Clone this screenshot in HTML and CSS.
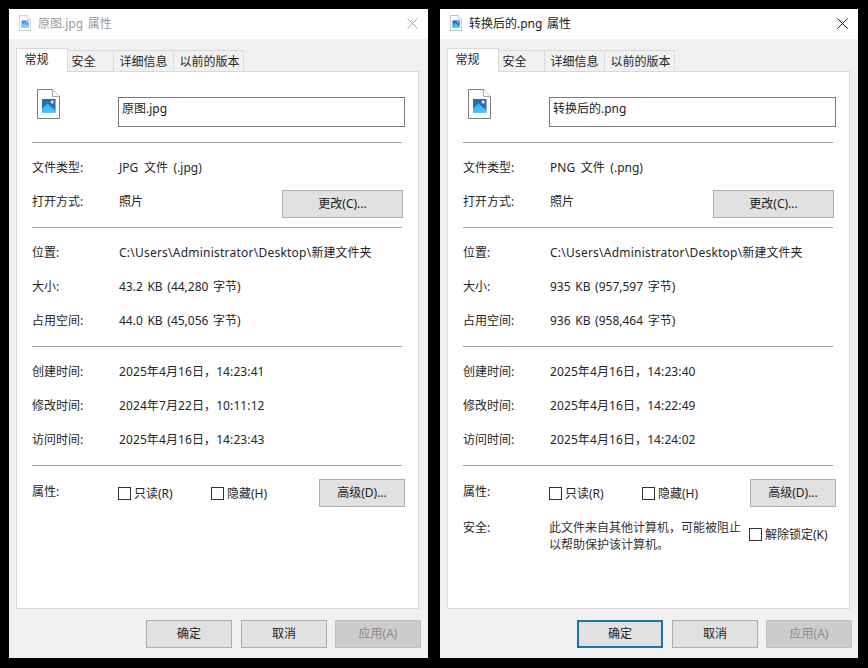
FILE: index.html
```html
<!DOCTYPE html>
<html lang="zh-CN">
<head>
<meta charset="utf-8">
<title>属性</title>
<link rel="stylesheet" href="styles.css">
</head>
<body>
<svg class="defs" width="0" height="0" aria-hidden="true">
  <defs>
    <linearGradient id="sky" x1="0" y1="0" x2="1" y2="1"><stop offset="0" stop-color="#1f6fc0"/><stop offset="1" stop-color="#3a63b8"/></linearGradient>
    <linearGradient id="hill" x1="0" y1="0" x2="1" y2="1"><stop offset="0" stop-color="#2fb4ee"/><stop offset="1" stop-color="#4fc8f2"/></linearGradient>
    <symbol id="file" viewBox="0 0 23 30">
      <path d="M.5.5H15.5L22.5 7.5V29.5H.5Z" fill="#fdfdfd" stroke="#7c7c7c"/>
      <path d="M15.5.5V7.5H22.5" fill="#fff" stroke="#a8a8a8"/>
      <rect x="5" y="10" width="13.5" height="13.5" fill="url(#sky)"/>
      <path d="M5 23.5V19.5L10.5 14.5 18.5 21.5V23.5Z" fill="url(#hill)"/>
      <path d="M14.6 11.2h1.1v1.2h1.2v1.1h-1.2v1.2h-1.1v-1.2h-1.2v-1.1h1.2Z" fill="#fff"/>
    </symbol>
  </defs>
</svg>

<section class="window window-inactive">
  <header class="titlebar">
    <svg class="title-icon"><use href="#file"/></svg>
    <span class="title-text">原图.jpg 属性</span>
    <svg class="close" viewBox="0 0 11 11"><path d="M.5.5 10.5 10.5M10.5.5.5 10.5"/></svg>
  </header>
  <nav class="tabs">
    <span class="tab tab-active">常规</span>
    <span class="tab tab-2">安全</span>
    <span class="tab tab-3">详细信息</span>
    <span class="tab tab-4">以前的版本</span>
  </nav>
  <main class="panel">
    <div class="head">
      <svg class="file-icon"><use href="#file"/></svg>
      <div class="name-box">原图.jpg</div>
    </div>
    <div class="section">
      <div class="row"><span class="label">文件类型:</span><span class="type">JPG 文件 (.jpg)</span></div>
      <div class="row"><span class="label">打开方式:</span><span>照片</span><button class="btn btn-change">更改(C)...</button></div>
    </div>
    <div class="section">
      <div class="row"><span class="label">位置:</span><span class="path">C:\Users\Administrator\Desktop\<span class="folder">新建文件夹</span></span></div>
      <div class="row"><span class="label">大小:</span><span>43.2 KB (44,280 字节)</span></div>
      <div class="row"><span class="label">占用空间:</span><span>44.0 KB (45,056 字节)</span></div>
    </div>
    <div class="section">
      <div class="row"><span class="label">创建时间:</span><span class="stamp">2025年4月16日，14:23:41</span></div>
      <div class="row"><span class="label">修改时间:</span><span class="stamp">2024年7月22日，10:11:12</span></div>
      <div class="row"><span class="label">访问时间:</span><span class="stamp">2025年4月16日，14:23:43</span></div>
    </div>
    <div class="section section-last">
      <div class="row row-attrs">
        <span class="label">属性:</span>
        <span class="check check-ro"><i class="box"></i>只读(R)</span>
        <span class="check"><i class="box"></i>隐藏(H)</span>
        <button class="btn btn-adv">高级(D)...</button>
      </div>
    </div>
  </main>
  <footer class="footer">
    <button class="btn btn-foot">确定</button>
    <button class="btn btn-foot">取消</button>
    <button class="btn btn-foot btn-disabled">应用(A)</button>
  </footer>
</section>

<section class="window">
  <header class="titlebar">
    <svg class="title-icon"><use href="#file"/></svg>
    <span class="title-text">转换后的.png 属性</span>
    <svg class="close" viewBox="0 0 11 11"><path d="M.5.5 10.5 10.5M10.5.5.5 10.5"/></svg>
  </header>
  <nav class="tabs">
    <span class="tab tab-active">常规</span>
    <span class="tab tab-2">安全</span>
    <span class="tab tab-3">详细信息</span>
    <span class="tab tab-4">以前的版本</span>
  </nav>
  <main class="panel">
    <div class="head">
      <svg class="file-icon"><use href="#file"/></svg>
      <div class="name-box">转换后的.png</div>
    </div>
    <div class="section">
      <div class="row"><span class="label">文件类型:</span><span class="type">PNG 文件 (.png)</span></div>
      <div class="row"><span class="label">打开方式:</span><span>照片</span><button class="btn btn-change">更改(C)...</button></div>
    </div>
    <div class="section">
      <div class="row"><span class="label">位置:</span><span class="path">C:\Users\Administrator\Desktop\<span class="folder">新建文件夹</span></span></div>
      <div class="row"><span class="label">大小:</span><span>935 KB (957,597 字节)</span></div>
      <div class="row"><span class="label">占用空间:</span><span>936 KB (958,464 字节)</span></div>
    </div>
    <div class="section">
      <div class="row"><span class="label">创建时间:</span><span class="stamp">2025年4月16日，14:23:40</span></div>
      <div class="row"><span class="label">修改时间:</span><span class="stamp">2025年4月16日，14:22:49</span></div>
      <div class="row"><span class="label">访问时间:</span><span class="stamp">2025年4月16日，14:24:02</span></div>
    </div>
    <div class="section section-last">
      <div class="row row-attrs">
        <span class="label">属性:</span>
        <span class="check check-ro"><i class="box"></i>只读(R)</span>
        <span class="check"><i class="box"></i>隐藏(H)</span>
        <button class="btn btn-adv">高级(D)...</button>
      </div>
      <div class="security">
        <span class="label">安全:</span>
        <p class="security-text">此文件来自其他计算机，可能被阻止<br>以帮助保护该计算机。</p>
        <span class="check check-unblock"><i class="box"></i>解除锁定(K)</span>
      </div>
    </div>
  </main>
  <footer class="footer">
    <button class="btn btn-foot btn-default">确定</button>
    <button class="btn btn-foot">取消</button>
    <button class="btn btn-foot btn-disabled">应用(A)</button>
  </footer>
</section>
</body>
</html>
```
FILE: styles.css
```css
* { box-sizing: border-box; }
html, body { height: 100%; }
body {
  margin: 0;
  padding: 9px 10px 10px 9px;
  background: #000;
  display: flex;
  gap: 12px;
  overflow: hidden;
  font: 12px/17px "Noto Sans", "Noto Sans CJK SC", sans-serif;
  word-spacing: 1.5px;
  color: #262626;
}
.defs { position: absolute; }
.window {
  width: 419px;
  background: #f0f0f0;
  display: flex;
  flex-direction: column;
}
.window + .window { width: 418px; }
.titlebar {
  height: 30px;
  flex: none;
  background: #fff;
  display: flex;
  align-items: center;
  padding: 0 10px 2px 10px;
}
.title-icon { width: 12px; height: 16px; margin-right: 7px; }
.title-text { flex: 1; color: #1c1c1c; }
.close { width: 11px; height: 11px; stroke: #1c1c1c; fill: none; }
.window-inactive .title-text { color: #9a9a9a; }
.window-inactive .close { stroke: #a6a6a6; }
.window-inactive .title-icon { opacity: .75; }
.tabs {
  display: flex;
  align-items: flex-end;
  height: 33px;
  flex: none;
  padding: 9px 0 0 7px;
  position: relative;
  z-index: 1;
  margin-bottom: -1px;
}
.tab {
  height: 22px;
  background: #f0f0f0;
  border: 1px solid #d9d9d9;
  border-left: 0;
  border-bottom: 1px solid #d9d9d9;
  display: flex;
  align-items: center;
  justify-content: center;
  padding-top: 1px;
}
.tab-active {
  height: 24px;
  width: 52px;
  background: #fff;
  border-left: 1px solid #d9d9d9;
  border-bottom: 0;
  padding: 0 11px 3px 0;
}
.tab-2 { width: 46px; padding-right: 14px; }
.tab-3 { width: 60px; }
.tab-4 { width: 70px; padding-left: 2px; }
.panel {
  flex: 1;
  margin: 0 9px 0 7px;
  background: #fff;
  border: 1px solid #d9d9d9;
  padding: 0 13px 0 15px;
  display: flex;
  flex-direction: column;
}
.window + .window .panel { margin-right: 8px; }
.head {
  height: 70px;
  display: flex;
  align-items: flex-start;
}
.file-icon { width: 23px; height: 30px; margin: 17px 0 0 5px; flex: none; }
.name-box {
  width: 287px;
  height: 30px;
  margin: 25px 0 0 58px;
  border: 1px solid #7a7a7a;
  padding: 1px 3px;
  line-height: 20px;
  color: #1c1c1c;
}
.section {
  border-top: 1px solid #a0a0a0;
  margin-right: 3px;
  padding: 7px 0 9px;
}
.section-last { padding: 8px 0 0; }
.row {
  height: 34px;
  display: flex;
  align-items: center;
  margin-right: -3px;
}
.label { width: 87px; flex: none; }
.type { word-spacing: 2.5px; }
.path { letter-spacing: .23px; }
.folder { letter-spacing: 0; }
.stamp { letter-spacing: .1px; }
.btn {
  font: inherit;
  word-spacing: inherit;
  color: #1c1c1c;
  background: #e1e1e1;
  border: 1px solid #adadad;
  padding: 0 0 2px;
  height: 28px;
}
.btn-change { width: 121px; margin: 6px 2px 0 auto; }
.btn-adv { width: 86px; margin: 4px 0 0 auto; }
.check { display: flex; align-items: center; }
.row-attrs .check { margin-top: 4px; }
.check-ro { width: 93px; flex: none; }
.box {
  width: 13px;
  height: 13px;
  border: 1px solid #333;
  background: #fff;
  margin: 0 3px 0 -1px;
  flex: none;
}
.security { display: flex; margin-top: 11px; align-items: flex-start; margin-right: -3px; }
.security-text { margin: 0 0 0 -1px; width: 201px; flex: none; color: #333; }
.check-unblock { margin: 7px 0 0; }
.footer {
  height: 49px;
  flex: none;
  display: flex;
  padding: 11px 0 0 137px;
}
.btn-foot { width: 86px; }
.btn-foot + .btn-foot { margin-left: 9px; }
.btn-foot + .btn-disabled { margin-left: 8px; }
.btn-disabled { background: #ccc; border-color: #bfbfbf; color: #8a8a8a; }
.btn-default { border: 2px solid #1a73ab; }
```
